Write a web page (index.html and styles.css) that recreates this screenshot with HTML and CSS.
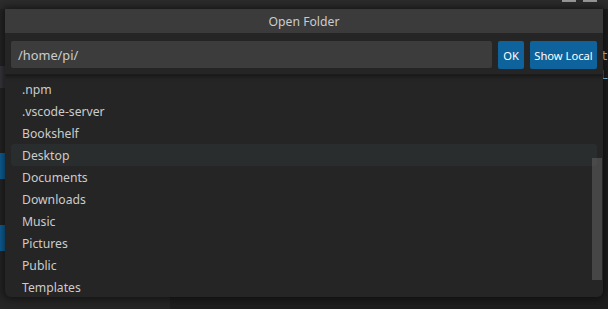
FILE: index.html
```html
<!DOCTYPE html>
<html>
<head>
<meta charset="utf-8">
<link rel="stylesheet" href="styles.css">
</head>
<body>
<div class="workbench">
  <div class="titlebar">
    <span class="tb-ctl"></span>
    <span class="tb-ctl"></span>
  </div>
  <div class="main">
    <aside class="sidebar">
      <div class="sb-sel"></div>
      <div class="sb-btn"></div>
      <div class="sb-btn second"></div>
    </aside>
    <div class="editor">
      <div class="code"><span class="c-y">t</span></div>
      <div class="code"><span class="c-b">L</span></div>
    </div>
  </div>
</div>

<div class="dialog">
  <div class="dlg-title">Open Folder</div>
  <div class="dlg-input-row">
    <div class="dlg-input">/home/pi/</div>
    <button class="btn btn-ok">OK</button>
    <button class="btn btn-local">Show Local</button>
  </div>
  <div class="dlg-list">
    <div class="item">.npm</div>
    <div class="item">.vscode-server</div>
    <div class="item">Bookshelf</div>
    <div class="item hover">Desktop</div>
    <div class="item">Documents</div>
    <div class="item">Downloads</div>
    <div class="item">Music</div>
    <div class="item">Pictures</div>
    <div class="item">Public</div>
    <div class="item">Templates</div>
    <div class="scrollbar"></div>
  </div>
</div>
</body>
</html>
```
FILE: styles.css
```css
html, body {
  margin: 0;
  padding: 0;
  width: 608px;
  height: 309px;
  overflow: hidden;
  background: #1e1e1e;
  font-family: "Noto Sans", "Open Sans", sans-serif;
}

.workbench {
  display: flex;
  flex-direction: column;
  width: 608px;
  height: 309px;
}

.titlebar {
  height: 9px;
  background: #2c2c2c;
  display: flex;
  justify-content: flex-end;
  gap: 7px;
  padding-right: 11px;
  box-sizing: border-box;
}

.tb-ctl {
  width: 14px;
  height: 2px;
  background: #9a9a9a;
}

.main {
  flex: 1;
  display: flex;
}

.sidebar {
  width: 173px;
  background: #252526;
  display: flex;
  flex-direction: column;
  overflow: hidden;
}

.sb-sel {
  margin-top: 57px;
  height: 22px;
  background: #37373d;
}

.sb-btn {
  margin-top: 65px;
  height: 26px;
  width: 120px;
  background: #0e639c;
}

.sb-btn.second {
  margin-top: 46px;
}

.editor {
  flex: 1;
  background: #1e1e1e;
  padding-top: 38px;
  padding-left: 431px;
}

.code {
  font-family: "DejaVu Sans Mono", monospace;
  font-size: 12px;
  line-height: 19px;
  white-space: pre;
}

.c-y { color: #dcdcaa; }
.c-b { color: #9cdcfe; }

/* Dialog overlay */
.dialog {
  position: absolute;
  left: 5px;
  top: 9px;
  width: 598px;
  height: 288px;
  background: #252526;
  border-radius: 0 0 6px 6px;
  box-shadow: 0 0 8px 2px rgba(0, 0, 0, 0.55);
  overflow: hidden;
  display: flex;
  flex-direction: column;
  color: #cccccc;
}

.dlg-title {
  height: 24px;
  background: #3b3b3b;
  font-size: 12.2px;
  line-height: 25px;
  text-align: center;
  color: #cccccc;
}

.dlg-input-row {
  display: flex;
  gap: 6px;
  padding: 8px 6px 5px;
  border-bottom: 1px solid #1c1c1c;
  box-shadow: 0 2px 3px rgba(0, 0, 0, 0.35);
  position: relative;
  z-index: 1;
}

.dlg-input {
  flex: 1;
  height: 27px;
  background: #3c3c3c;
  border-radius: 2px;
  padding-left: 7px;
  font-size: 12.8px;
  line-height: 28px;
  color: #cccccc;
}

.btn {
  height: 28px;
  border: none;
  border-radius: 2px;
  background: #0e639c;
  color: #ffffff;
  font-family: "Noto Sans", "Open Sans", sans-serif;
  font-size: 11.2px;
  padding: 0;
  margin: 0;
}

.btn-ok { width: 26px; }
.btn-local { width: 67px; }

.dlg-list {
  position: relative;
  flex: 1;
  padding: 3px 6px 0;
  overflow: hidden;
}

.item {
  height: 22px;
  line-height: 23px;
  padding-left: 11px;
  font-size: 12.2px;
  color: #cccccc;
  border-radius: 3px;
}

.item.hover {
  background: #2a2d2e;
}

.scrollbar {
  position: absolute;
  right: 1px;
  top: 83px;
  width: 10px;
  height: 122px;
  background: rgba(121, 121, 121, 0.4);
}
```
